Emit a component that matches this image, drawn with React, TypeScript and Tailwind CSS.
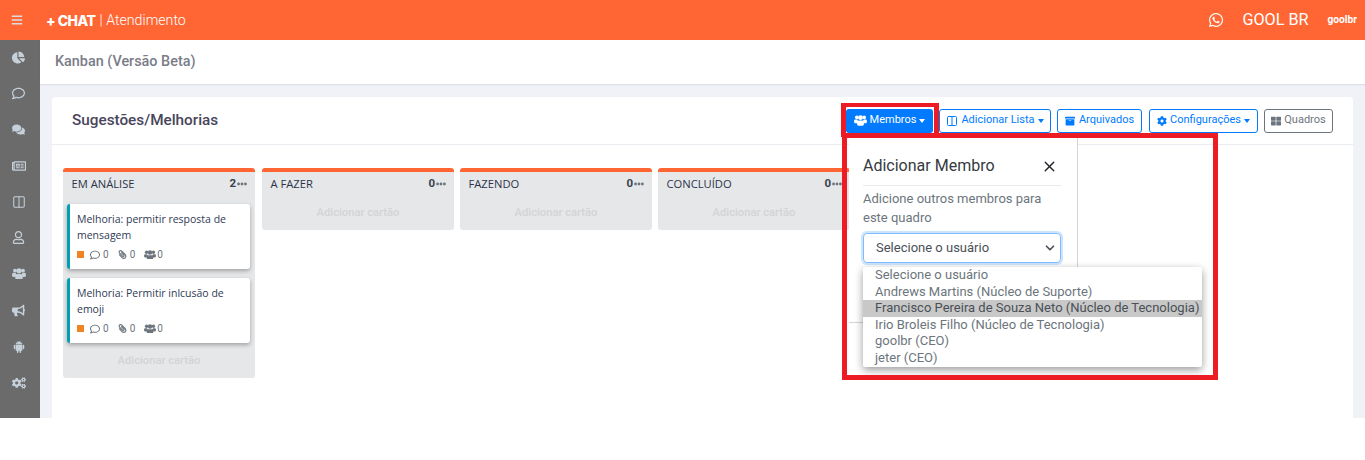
import { FaBars, FaChartPie, FaRegComment, FaComments, FaRegNewspaper, FaRegUser, FaBullhorn, FaCogs, FaWhatsapp, FaPaperclip, FaArchive, FaCog, FaThLarge, FaEllipsisH } from 'react-icons/fa';
import { AiFillAndroid } from 'react-icons/ai';
import { X, ChevronDown, Columns2 } from 'lucide-react';

function Users({ size, className }: { size: number; className?: string }) {
  return (
    <svg width={size} height={size * 0.82} viewBox="0 0 24 20" fill="currentColor" className={className}>
      <circle cx="5" cy="4.5" r="3.4" />
      <circle cx="19" cy="4.5" r="3.4" />
      <circle cx="12" cy="5" r="4.6" />
      <rect x="0" y="8.5" width="7" height="7" rx="2.2" />
      <rect x="17" y="8.5" width="7" height="7" rx="2.2" />
      <rect x="5.5" y="10.5" width="13" height="9.5" rx="3" />
    </svg>
  );
}

const sideIcons = [
  <FaChartPie size={13} />,
  <FaRegComment size={13} />,
  <FaComments size={13} />,
  <FaRegNewspaper size={14} />,
  <Columns2 size={14} strokeWidth={1.8} />,
  <FaRegUser size={13} />,
  <Users size={14} />,
  <FaBullhorn size={13} />,
  <AiFillAndroid size={14} />,
  <FaCogs size={14} />,
];

const options = [
  'Selecione o usuário',
  'Andrews Martins (Núcleo de Suporte)',
  'Francisco Pereira de Souza Neto (Núcleo de Tecnologia)',
  'Irio Broleis Filho (Núcleo de Tecnologia)',
  'goolbr (CEO)',
  'jeter (CEO)',
];

function Caret() {
  return <span className="ml-[3px] inline-block border-x-[3.5px] border-t-[4px] border-x-transparent border-t-current" />;
}

function KanbanCard({ title }: { title: string }) {
  return (
    <div className="h-[65px] rounded-[3px] border-l-[3px] border-[#00a0b4] bg-white pl-[7px] pt-[7px] shadow-[0_2px_4px_rgba(0,0,0,0.3)]">
      <p className="font-['Open_Sans',sans-serif] text-[10.5px] leading-4 text-[#2f3a55]">{title}</p>
      <div className="mt-[4px] flex items-center text-[10px] text-[#6c757d]">
        <span className="h-[7px] w-[7px] bg-[#f28322]" />
        <FaRegComment size={10} className="ml-[6px]" />
        <span className="ml-[3px]">0</span>
        <FaPaperclip size={9} className="ml-[9px] -scale-x-100" />
        <span className="ml-[3px]">0</span>
        <Users size={12} className="ml-[9px]" />
        <span className="ml-px">0</span>
      </div>
    </div>
  );
}

function Column({ title, count, className, children }: { title: string; count: number; className?: string; children?: React.ReactNode }) {
  return (
    <div className={`w-[192px] self-start rounded-[3px] border-t-[4px] border-[#ff6633] bg-[#e6e7e9] ${className ?? ''}`}>
      <div className="flex h-[24px] items-center justify-between pl-[8.5px] pr-2">
        <span className="font-['Open_Sans',sans-serif] text-[11.2px] font-medium text-[#2b3349]">{title}</span>
        <span className="flex items-center gap-px text-[11.5px] font-bold text-[#3a3f4b]">
          {count}
          <FaEllipsisH size={10} className="text-[#6c757d]" />
        </span>
      </div>
      {children ?? null}
      <div className="flex h-[34px] items-center justify-center text-[11.2px] font-medium text-[#d3d4d6]">Adicionar cartão</div>
    </div>
  );
}

export default function App() {
  return (
    <div className="relative h-[460px] w-[1365px] overflow-hidden bg-white font-['Roboto',sans-serif]">
      <header className="flex h-10 items-center bg-[#ff6633] text-white">
        <FaBars size={12} className="ml-[11px] text-[#d9dde3]" />
        <span className="ml-[23px] font-['Inter',sans-serif] text-[14px] font-extrabold tracking-[-0.5px]">+ CHAT</span>
        <span className="ml-[4px] pt-px text-[14.2px] font-light">| Atendimento</span>
        <FaWhatsapp size={16} className="ml-auto" />
        <span className="ml-[18px] text-[16.2px]">GOOL BR</span>
        <span className="ml-[19px] mr-[8px] text-[10.2px] font-bold">goolbr</span>
      </header>
      <div className="flex h-[378px]">
        <aside className="flex w-10 flex-col items-center bg-[#6b6b6b] pr-[3px] pt-[10px] text-[#c5d0da]">
          {sideIcons.map((icon, i) => (
            <div key={i} className="flex h-[36.1px] items-start justify-center pt-px">
              {icon}
            </div>
          ))}
        </aside>
        <main className="flex-1 bg-[#f0f2f8]">
          <div className="flex h-[44px] items-center bg-white pl-[15px] text-[14.4px] font-medium text-[#7a7c88] shadow-[0_1px_1px_rgba(0,0,0,0.08)]">
            Kanban (Versão Beta)
          </div>
          <section className="relative ml-3 mr-3 mt-[13px] h-[321px] rounded-t-[4px] bg-white">
            <div className="flex h-[48px] items-center border-b border-[#ebedf2] pl-5 pr-[20px]">
              <h2 className="text-[15.3px] font-medium text-[#48465b]">Sugestões/Melhorias</h2>
              <div className="ml-auto flex items-center text-[11px]">
                <button className="flex h-[24px] w-[87px] items-center justify-center rounded-[3px] bg-[#007bff] text-white">
                  <Users size={13} className="mr-[3px]" />Membros<Caret />
                </button>
                <button className="ml-[6px] flex h-[24px] w-[112px] items-center justify-center rounded-[3px] border border-[#007bff] text-[#007bff]">
                  <Columns2 size={12} className="mr-[3px]" />Adicionar Lista<Caret />
                </button>
                <button className="ml-[6px] flex h-[24px] w-[85px] items-center justify-center rounded-[3px] border border-[#007bff] text-[#007bff]">
                  <FaArchive size={10} className="mr-[4px]" />Arquivados
                </button>
                <button className="ml-[7px] flex h-[24px] w-[109px] items-center justify-center rounded-[3px] border border-[#007bff] text-[#007bff]">
                  <FaCog size={10} className="mr-[3px]" />Configurações<Caret />
                </button>
                <button className="ml-[6px] flex h-[24px] w-[69px] items-center justify-center rounded-[3px] border border-[#6c757d] text-[#6c757d]">
                  <FaThLarge size={10} className="mr-[3px]" />Quadros
                </button>
              </div>
            </div>
            <div className="flex gap-[6px] pl-[11px] pt-[23px]">
              <Column title="EM ANÁLISE" count={2}>
                <div className="flex flex-col gap-[9px] pb-px pl-1 pr-[5px] pt-2">
                  <KanbanCard title="Melhoria: permitir resposta de mensagem" />
                  <KanbanCard title="Melhoria: Permitir inlcusão de emoji" />
                </div>
              </Column>
              <Column title="A FAZER" count={0} className="ml-px" />
              <Column title="FAZENDO" count={0} />
              <Column title="CONCLUÍDO" count={0} />
            </div>
            {/* popover */}
            <div className="absolute left-[797px] top-[37px] h-[189px] w-[229px] border-b border-r border-[#d5d5d5] bg-white pl-[14px] pr-[16px]">
              <div className="flex h-[52px] items-center justify-between border-b border-[#e9ecef] pr-[3px] pt-[13px]">
                <span className="text-[16px] text-[#343a40]">Adicionar Membro</span>
                <X size={17} className="text-[#212529]" />
              </div>
              <p className="mt-[3px] text-[13px] leading-[19px] text-[#6c757d]">Adicione outros membros para este quadro</p>
              <div className="mt-[6px] flex h-[30px] items-center justify-between rounded-[4px] border border-[#80bdff] pl-[12px] pr-[3px] text-[13px] text-[#495057] shadow-[0_0_0_2px_rgba(0,123,255,0.2)]">
                Selecione o usuário
                <ChevronDown size={14} strokeWidth={3} />
              </div>
            </div>
            {/* native select list */}
            <div className="absolute left-[811px] top-[170px] w-[339px] rounded-[2px] bg-white text-[13px] leading-[16.6px] text-[#6c757d] shadow-[0_3px_8px_rgba(0,0,0,0.4)]">
              {options.map((o, i) => (
                <div key={o} className={i === 2 ? 'bg-[#c8c8c8] pl-3 text-[#495057]' : 'pl-3'}>{o}</div>
              ))}
            </div>
          </section>
        </main>
      </div>
      {/* annotation boxes */}
      <div className="absolute left-[841px] top-[103px] h-[34px] w-[98px] border-x-[5px] border-y-[4px] border-[#ed1c24]" />
      <div className="absolute left-[842px] top-[133px] h-[247px] w-[376px] border-[5px] border-[#ed1c24]" />
    </div>
  );
}
